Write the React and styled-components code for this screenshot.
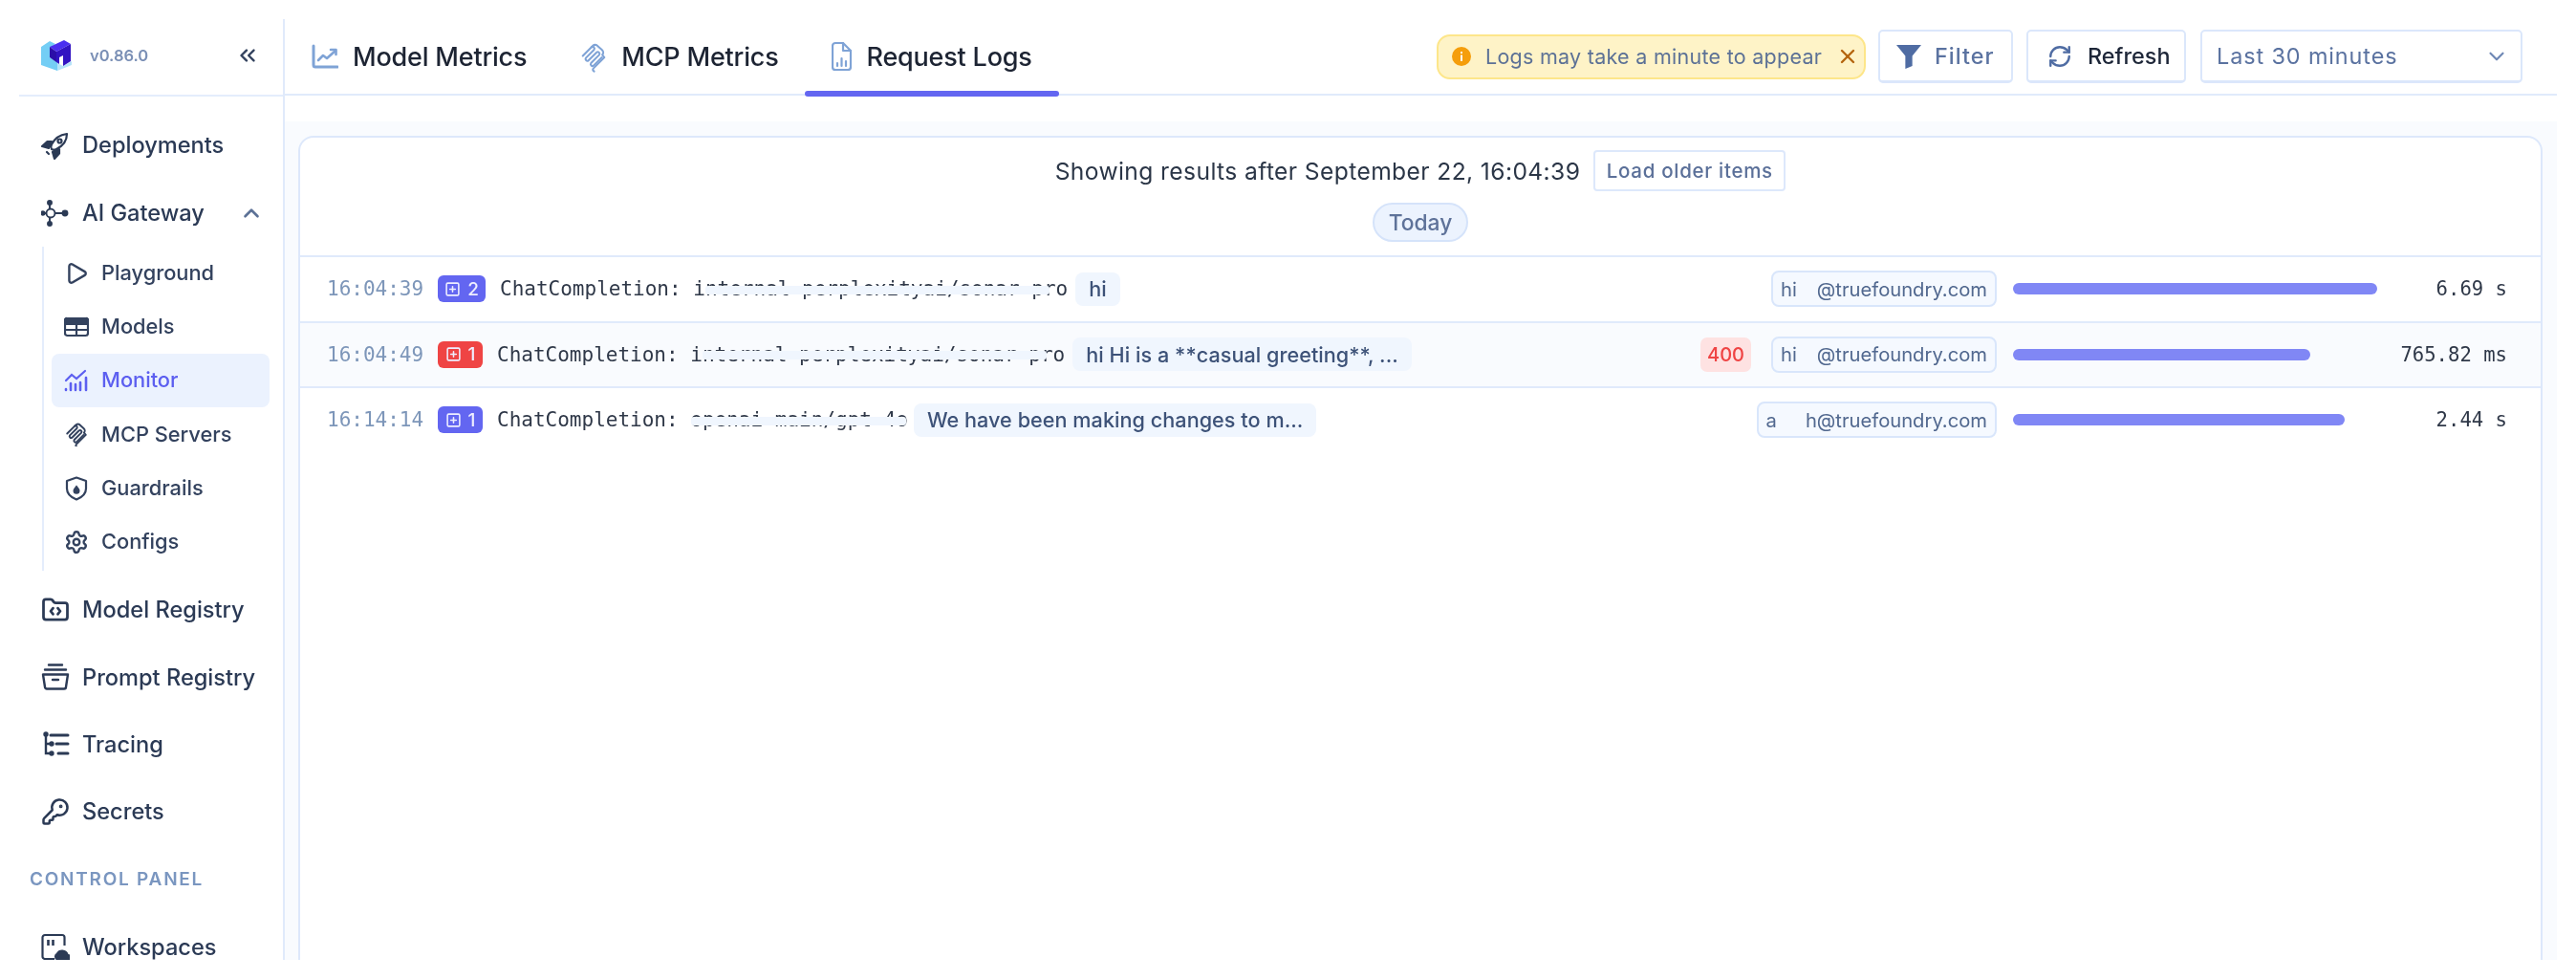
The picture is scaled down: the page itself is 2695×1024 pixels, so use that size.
import React from "react";
import styled, { createGlobalStyle } from "styled-components";
import { ChevronsLeft, ChevronUp, ChevronDown, Play, Settings, FolderCode, KeyRound, RefreshCw, X, SquarePlus } from "lucide-react";

const Global = createGlobalStyle`
  html, body { margin: 0; padding: 0; background: #fff; }
  body { font-family: Inter, "Noto Sans", sans-serif; color: #2b3a55; }
  * { box-sizing: border-box; }
`;

const Frame = styled.div`
  width: 2695px; height: 1024px; padding: 20px; background: #fff; overflow: hidden; display: flex;
  filter: blur(0.55px);
`;
const Sidebar = styled.aside`
  width: 278px; flex: none; border-right: 2px solid #e0eafb; overflow: hidden; display: flex; flex-direction: column;
`;
const Brand = styled.div`
  height: 81px; flex: none; border-bottom: 2px solid #e4edfc; display: flex; align-items: center; padding: 0 24px 3px 23px;
  svg.logo { width: 32px; height: 33px; }
`;
const Version = styled.span`
  margin-left: 19px; font-size: 16.5px; font-weight: 600; color: #7b90b6; flex: 1;
`;
const Nav = styled.nav`
  padding-top: 16px; display: flex; flex-direction: column; line-height: 1;
`;
const NavRow = styled.div`
  height: ${p => p.$h || 70.4}px; flex: none; display: flex; align-items: center; padding-left: 23px; padding-right: 20px; font-size: 23.6px; font-weight: 500; color: #2b3a55; gap: 13px;
  & > svg:first-child { width: 30px; height: 30px; flex: none; }
  & > span { flex: 1; white-space: nowrap; }
`;
const SubNav = styled.div`
  margin: 0 14px 6px 24px; border-left: 2px solid #e4edfc; padding: 0 0 2px 8px; display: flex; flex-direction: column;
`;
const SubRow = styled.div`
  height: 56.2px; flex: none; display: flex; align-items: center; padding-left: 13px; gap: 13px; font-size: 21.8px; font-weight: 500; border-radius: 8px;
  color: ${p => (p.$active ? "#5c5ff0" : "#33425e")};
  background: ${p => (p.$active ? "#ebf2fe" : "transparent")};
  & > svg { width: 26px; height: 26px; flex: none; }
`;
const SectionLabel = styled.div`
  height: 70px; flex: none; display: flex; align-items: center; padding-left: 11px; font-size: 19px; font-weight: 600; letter-spacing: 1.75px; color: #7a96c0; margin-bottom: 24px;
`;
const Main = styled.main`
  flex: 1; min-width: 0; display: flex; flex-direction: column;
`;
const Header = styled.header`
  height: 80px; flex: none; border-bottom: 2px solid #e0eafb; display: flex; align-items: center; padding-right: 36px;
`;
const Tab = styled.div`
  position: relative; height: 100%; display: flex; align-items: center; gap: 15px; padding: 0 28px; font-size: 27px; font-weight: 500; color: #1d2433; letter-spacing: -0.2px; white-space: nowrap;
  svg { height: 34px; flex: none; }
  ${p => p.$active && `&::after { content: ""; position: absolute; left: 0; right: 0; bottom: -3px; height: 6px; border-radius: 3px; background: #6366f1; }`}
`;
const HeaderRight = styled.div`
  margin-left: auto; display: flex; align-items: center;
`;
const Notice = styled.div`
  width: 449px; height: 47px; background: #fef3c7; border: 2px solid #fde68a; border-radius: 14px; display: flex; align-items: center; padding: 0 12px 0 14px; font-size: 21.5px; letter-spacing: 0.27px; color: #5c7196; font-weight: 400; gap: 15px; white-space: nowrap; margin-right: 13px;
  & > svg:first-child { width: 20px; height: 20px; flex: none; }
  & > span { flex: 1; }
  & > svg:last-child { width: 24px; height: 24px; color: #b5650f; flex: none; }
`;
const Button = styled.div`
  width: ${p => p.$w}px; height: 56px; background: #fff; border: 2px solid #dbe7fb; border-bottom-width: 3px; border-radius: 5px; display: flex; align-items: center; padding-left: ${p => p.$pl}px; gap: ${p => p.$gap}px; font-size: 23.4px; font-weight: 500; letter-spacing: ${p => p.$ls || 0}px; color: ${p => p.$color}; margin-right: ${p => p.$mr || 0}px; white-space: nowrap;
  svg { width: 26px; height: 26px; flex: none; }
`;
const Select = styled(Button)`
  justify-content: space-between; padding-right: 12px; font-weight: 400; letter-spacing: 0.9px;
  svg { color: #6f88b5; }
`;
const Body = styled.div`
  flex: 1; min-height: 0; margin-top: 27px; background: #f9fbfe; padding: 15px 15px 0 14px; overflow: hidden;
`;
const Card = styled.section`
  height: 100%; min-height: 880px; background: #fff; border: 2px solid #dde8fb; border-radius: 16px 16px 0 0;
`;
const Summary = styled.div`
  height: 123px; display: flex; flex-direction: column; align-items: center; padding-top: 13px;
`;
const SummaryLine = styled.div`
  display: flex; align-items: center; gap: 14px; font-size: 24.6px; letter-spacing: 0.4px; color: #2b3647; white-space: nowrap; height: 43px;
`;
const LoadBtn = styled.div`
  width: 201px; height: 43px; border: 2px solid #dde8fb; border-radius: 4px; display: flex; align-items: center; justify-content: center; font-size: 20.5px; letter-spacing: 0.7px; font-weight: 500; color: #5b7099; background: #fff;
`;
const TodayPill = styled.div`
  margin-top: 12px; width: 100px; height: 41px; border-radius: 21px; border: 2px solid #d5e3fa; background: #ecf3fe; display: flex; align-items: center; justify-content: center; font-size: 22.8px; font-weight: 500; color: #5e7299;
`;
const LogRow = styled.div`
  height: 68.5px; display: flex; align-items: center; padding: 0 35px 0 28px; border-top: 2px solid #e0eafb; background: ${p => (p.$alt ? "#f9fbfe" : "#fff")};
`;
const Mono = styled.span`
  font-family: "DejaVu Sans Mono", "Liberation Mono", monospace; font-size: 21px; white-space: nowrap;
`;
const Time = styled(Mono)`
  color: #7d96b9; margin-right: 14px; width: 102px; flex: none; letter-spacing: 0;
`;
const CountBadge = styled.div`
  width: ${p => p.$w}px; height: 28px; border-radius: 6px; flex: none; background: ${p => (p.$error ? "#ef4444" : "#6366f1")}; color: #eef; display: flex; align-items: center; justify-content: center; gap: 7px; font-size: 19px; font-weight: 500; margin-right: 15px;
  svg { width: 17px; height: 17px; }
`;
const Call = styled(Mono)`
  color: #2f3848; margin-right: ${p => p.$mr}px;
`;
const Model = styled.span`
  position: relative; display: inline-block;
`;
const Smudge = styled.span`
  position: absolute; left: ${p => p.$l}px; right: ${p => p.$r}px; top: 8.5px; height: 9px; background: #f0f6fe; border-radius: 3px;
`;
const Message = styled.div`
  height: 35px; display: flex; align-items: center; padding: 0 14px; border-radius: 8px; background: #f0f6fe; font-size: 21.6px; letter-spacing: 0.05px; font-weight: 500; color: #3d5278; white-space: nowrap; flex: none;
`;
const RowEnd = styled.div`
  margin-left: auto; display: flex; align-items: center;
`;
const StatusChip = styled.div`
  width: 53px; height: 36px; background: #fee2e2; border-radius: 7px; display: flex; align-items: center; justify-content: center; font-size: 20px; color: #ef4444; font-weight: 500; margin-right: 21px;
`;
const UserChip = styled.div`
  height: 38px; border: 2px solid #d9e6fb; background: #f5f9ff; border-radius: 8px; display: flex; align-items: center; padding: 0 8px; font-size: 20.2px; color: #51688f; white-space: nowrap;
`;
const Redacted = styled.span`
  display: inline-block; width: ${p => p.$w}px;
`;
const Track = styled.div`
  width: 381px; margin-left: 17px; flex: none;
`;
const Fill = styled.div`
  height: 12px; border-radius: 6px; background: #8087f5;
`;
const Duration = styled(Mono)`
  width: 136px; text-align: right; color: #2f3848; flex: none; font-size: 20.6px;
`;

const Logo = () => (
  <svg className="logo" viewBox="0 0 32 33">
    <path d="M0 7 9 1l6 3-6 4v10l8 5v9L0 26Z" fill="#74cef5" />
    <path d="M17 32v-8l6 3 9-5v4Z" fill="#b7e4f9" />
    <path d="M9 7l15-7 7 4-15 8Z" fill="#4a2ff0" />
    <path d="M9 7l7 5v11l-7-5Z" fill="#2b0fa8" />
    <path d="M16 12l15-8v18l-8 5V16l-4 2v7l-3-2Z" fill="#3214c2" />
  </svg>
);
const RocketIcon = () => (
  <svg viewBox="0 0 30 30" fill="none" stroke="#2b3a55" strokeWidth="2.2" strokeLinejoin="round" strokeLinecap="round">
    <path d="M11 19c-1-2-1-3 0-5 3-6 8-10 16-11 0 8-5 13-11 16-2 1-3 1-5 0Z" />
    <circle cx="19.5" cy="10.5" r="2" />
    <path d="M11 11H6.5L1 16l7 2 3-5Z" fill="#2b3a55" />
    <path d="M19 19v4.500L14 29l-2-7 5-3Z" fill="#2b3a55" />
    <path d="M6 22l2 2" />
  </svg>
);
const HubIcon = () => (
  <svg viewBox="0 0 30 30" fill="none" stroke="#2b3a55" strokeWidth="1.9">
    <circle cx="10" cy="15" r="4.500" />
    <path d="M9 10.500V6M5.500 15H3M9 19.500V24M14.500 15H22" />
    <circle cx="9" cy="4" r="2" fill="#2b3a55" />
    <circle cx="1.800" cy="15" r="1.800" fill="#2b3a55" />
    <circle cx="9" cy="26" r="2" fill="#2b3a55" />
    <circle cx="25" cy="15" r="2.500" fill="#2b3a55" />
  </svg>
);
const ModelsIcon = () => (
  <svg viewBox="0 0 26 26" fill="none" stroke="#33425e" strokeWidth="2.2">
    <rect x="1" y="4" width="24" height="18" rx="2.500" />
    <path d="M1 5a2 2 0 0 1 2-1h20a2 2 0 0 1 2 1v5H1Z" fill="#33425e" />
    <path d="M1 16h24M13 10v12" />
  </svg>
);
const MonitorIcon = () => (
  <svg viewBox="0 0 26 26" fill="none" stroke="#5c5ff0" strokeWidth="2.2" strokeLinecap="round">
    <path d="M2 13 8 7l5 4 9-8" />
    <path d="M2 23v-1M7 23v-7M12 23v-6M17 23v-8M23 23V10" strokeWidth="2.600" />
  </svg>
);
const McpIcon = ({ color = "#33425e", sw = 2.1, w = 26 }) => (
  <svg viewBox="0 0 26 28" width={w} fill="none" stroke={color} strokeWidth={sw} strokeLinecap="round" strokeLinejoin="round">
    <path d="M2.500 13.500 11 5a1.800 1.800 0 0 1 2.500 2.500l-8 8a1.800 1.800 0 0 0 2.500 2.500l8-8a1.800 1.800 0 0 1 2.500 2.500l-8 8a1.800 1.800 0 0 0 2.500 2.500l8-8" />
    <path d="M11 5c2-2 3-3 5-2l5 4.500c2 2 2 3 .5 5L23.500 15 13 25.500c-1 1-1 2 .5 3" />
  </svg>
);
const ShieldIcon = () => (
  <svg viewBox="0 0 26 26" fill="none" stroke="#33425e" strokeWidth="2.200" strokeLinejoin="round">
    <path d="M13 1.500 23 5v8c0 6-5 9.500-10 11.500C8 22.500 3 19 3 13V5Z" />
    <path d="M13 9.500c2 2.500 3.500 4 3.500 5.800a3.500 3.500 0 0 1-7 0c0-1.800 1.500-3.300 3.500-5.800Z" fill="#33425e" stroke="none" />
  </svg>
);
const ArchiveIcon = () => (
  <svg viewBox="0 0 30 30" fill="none" stroke="#2b3a55" strokeWidth="2.400" strokeLinecap="round">
    <path d="M8 2.500h14M4 7.500h22" />
    <path d="M2 12.500h26l-2 13a2 2 0 0 1-2 2H6a2 2 0 0 1-2-2Z" strokeLinejoin="round" />
    <path d="M12 18h6" />
  </svg>
);
const TraceIcon = () => (
  <svg viewBox="0 0 30 30" fill="none" stroke="#2b3a55" strokeWidth="2.400" strokeLinecap="round">
    <path d="M5 4v20h5M5 14h5" />
    <circle cx="5" cy="4" r="1.500" fill="#2b3a55" />
    <circle cx="11" cy="14" r="1.500" fill="#2b3a55" />
    <circle cx="11" cy="24" r="1.500" fill="#2b3a55" />
    <path d="M10 5h18M16 14h12M18 24h10" strokeWidth="3" />
  </svg>
);
const WorkspaceIcon = () => (
  <svg viewBox="0 0 30 30" fill="none" stroke="#2b3a55" strokeWidth="2.200">
    <path d="M14 28H4a2.500 2.500 0 0 1-2.500-2.500v-20A2.500 2.500 0 0 1 4 3h18a2.500 2.500 0 0 1 2.500 2.500V14" />
    <path d="M7.500 8v6M12.500 8v6" strokeWidth="2.600" />
    <path d="M16 29a4 4 0 0 1 0-7 7 7 0 0 1 12.500 1 3.500 3.500 0 0 1 2 6Z" fill="#2b3a55" stroke="none" />
  </svg>
);
const ChartIcon = () => (
  <svg viewBox="0 0 28 34" width="28" fill="none" stroke="#7fa3d6" strokeWidth="2.600" strokeLinecap="round" strokeLinejoin="round">
    <path d="M2 6v20a2 2 0 0 0 2 2h23" strokeWidth="3" />
    <path d="M7 21l5-5 4 3 9-8" />
    <path d="M20 10h5.500v5" />
  </svg>
);
const LogFileIcon = () => (
  <svg viewBox="0 0 21 34" width="21" fill="none" stroke="#7fa3d6" strokeWidth="2.200" strokeLinecap="round" strokeLinejoin="round">
    <path d="M12 3H4a3 3 0 0 0-3 3v22a3 3 0 0 0 3 3h13a3 3 0 0 0 3-3V11Z" />
    <path d="M12 3v8h8" />
    <path d="M6 27v-3M10.500 27v-8M15 27v-5" />
  </svg>
);
const FunnelIcon = () => (
  <svg viewBox="0 0 25 25" fill="#4f6ca3"><path d="M0 1h25l-9 11v10l-7 3V12Z" /></svg>
);
const InfoIcon = () => (
  <svg viewBox="0 0 20 20"><circle cx="10" cy="10" r="10" fill="#f59e0b" /><rect x="9" y="5" width="2" height="2" fill="#fff" /><rect x="9" y="8.500" width="2" height="6.500" fill="#fff" /></svg>
);

const rows = [
  { time: "16:04:39", n: 2, w: 50, mr: 8, model: "internal-perplexityai/sonar-pro", l: 13, r: 19, msg: "hi", first: "hi", gap: 21, last: "", pct: 100, dur: "6.69 s" },
  { time: "16:04:49", n: 1, w: 47, mr: 8, error: true, model: "internal-perplexityai/sonar-pro", l: 13, r: 19, msg: "hi Hi is a **casual greeting**, ...", status: "400", first: "hi", gap: 21, last: "", pct: 81.6, dur: "765.82 ms" },
  { time: "16:14:14", n: 1, w: 47, mr: 6, model: "openai-main/gpt-4o", l: 1, r: 2, msg: "We have been making changes to m...", first: "a", gap: 30, last: "h", pct: 91, dur: "2.44 s" },
];

export default function App() {
  return (
    <>
      <Global />
      <Frame>
        <Sidebar>
          <Brand>
            <Logo />
            <Version>v0.86.0</Version>
            <ChevronsLeft size={26} color="#33425e" strokeWidth={2.2} />
          </Brand>
          <Nav>
            <NavRow><RocketIcon /><span>Deployments</span></NavRow>
            <NavRow><HubIcon /><span>AI Gateway</span><ChevronUp size={26} color="#5c7196" strokeWidth={2.4} /></NavRow>
            <SubNav>
              <SubRow><Play strokeWidth={2.2} /><span>Playground</span></SubRow>
              <SubRow><ModelsIcon /><span>Models</span></SubRow>
              <SubRow $active><MonitorIcon /><span>Monitor</span></SubRow>
              <SubRow><McpIcon /><span>MCP Servers</span></SubRow>
              <SubRow><ShieldIcon /><span>Guardrails</span></SubRow>
              <SubRow><Settings strokeWidth={2.2} /><span>Configs</span></SubRow>
            </SubNav>
            <NavRow><FolderCode strokeWidth={2.2} /><span>Model Registry</span></NavRow>
            <NavRow><ArchiveIcon /><span>Prompt Registry</span></NavRow>
            <NavRow><TraceIcon /><span>Tracing</span></NavRow>
            <NavRow><KeyRound strokeWidth={2} /><span>Secrets</span></NavRow>
            <SectionLabel>CONTROL PANEL</SectionLabel>
            <NavRow $h={24}><WorkspaceIcon /><span>Workspaces</span></NavRow>
          </Nav>
        </Sidebar>
        <Main>
          <Header>
            <Tab><ChartIcon />Model Metrics</Tab>
            <Tab><McpIcon color="#7fa3d6" sw={1.9} w={28} />MCP Metrics</Tab>
            <Tab $active><LogFileIcon />Request Logs</Tab>
            <HeaderRight>
              <Notice><InfoIcon /><span>Logs may take a minute to appear</span><X strokeWidth={2.4} /></Notice>
              <Button $w={141} $pl={17} $gap={14} $ls={1} $color="#5a72a0" $mr={14}><FunnelIcon />Filter</Button>
              <Button $w={167} $pl={20} $gap={16} $color="#1d2638" $mr={15}><RefreshCw color="#4f6ca3" strokeWidth={2.2} />Refresh</Button>
              <Select $w={337} $pl={15} $gap={0} $color="#5a72a0">Last 30 minutes<ChevronDown strokeWidth={2} /></Select>
            </HeaderRight>
          </Header>
          <Body>
            <Card>
              <Summary>
                <SummaryLine>Showing results after September 22, 16:04:39<LoadBtn>Load older items</LoadBtn></SummaryLine>
                <TodayPill>Today</TodayPill>
              </Summary>
              {rows.map((r, i) => (
                <LogRow key={r.time} $alt={i === 1}>
                  <Time>{r.time}</Time>
                  <CountBadge $w={r.w} $error={r.error}><SquarePlus strokeWidth={2.2} />{r.n}</CountBadge>
                  <Call $mr={r.mr}>ChatCompletion: <Model>{r.model}<Smudge $l={r.l} $r={r.r} /></Model></Call>
                  <Message>{r.msg}</Message>
                  <RowEnd>
                    {r.status && <StatusChip>{r.status}</StatusChip>}
                    <UserChip>{r.first}<Redacted $w={r.gap} />{r.last}@truefoundry.com</UserChip>
                    <Track><Fill style={{ width: `${r.pct}%` }} /></Track>
                    <Duration>{r.dur}</Duration>
                  </RowEnd>
                </LogRow>
              ))}
            </Card>
          </Body>
        </Main>
      </Frame>
    </>
  );
}
